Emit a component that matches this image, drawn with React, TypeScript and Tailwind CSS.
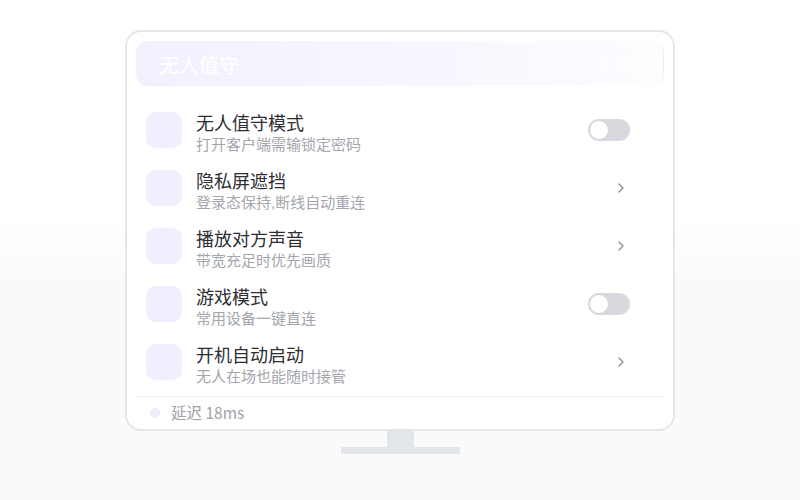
import React from "react";

type Row = { title: string; sub: string; kind: "toggle" | "chevron" };

const rows: Row[] = [
  { title: "无人值守模式", sub: "打开客户端需输锁定密码", kind: "toggle" },
  { title: "隐私屏遮挡", sub: "登录态保持,断线自动重连", kind: "chevron" },
  { title: "播放对方声音", sub: "带宽充足时优先画质", kind: "chevron" },
  { title: "游戏模式", sub: "常用设备一键直连", kind: "toggle" },
  { title: "开机自动启动", sub: "无人在场也能随时接管", kind: "chevron" },
];

function Toggle() {
  return (
    <div className="w-[42px] h-[22px] rounded-full bg-[#d7d9df] p-[1px] flex items-center mr-[33px]">
      <div className="w-[20px] h-[20px] rounded-full bg-white border border-[#d3d6dc]" />
    </div>
  );
}

function Chevron() {
  return (
    <svg width="8" height="12" viewBox="0 0 8 12" className="mr-[38px]">
      <path d="M2 2 L6 6 L2 10" fill="none" stroke="#8d919b" strokeWidth="1.4" strokeLinecap="round" strokeLinejoin="round" />
    </svg>
  );
}

export default function App() {
  return (
    <div
      className="w-[800px] h-[500px] flex flex-col items-center bg-[linear-gradient(to_bottom,#ffffff_0%,#ffffff_44%,#fafafb_56%,#fafafb_100%)]"
      style={{ fontFamily: '"Noto Sans CJK SC", "Noto Sans", sans-serif' }}
    >
      <div className="mt-[30px] w-[550px] h-[401px] rounded-[16px] border-2 border-[#e4e6ea] bg-white pt-[9px] px-[9px] flex flex-col">
        <div className="h-[45px] rounded-[12px] bg-[linear-gradient(to_right,#f3f0fe,#f8f7ff_60%,#fdfdff)] flex items-center pl-[23px] pr-[14px] border-r border-[#eeeef2]">
          <span className="text-[20px] font-medium text-white leading-none mt-[2px]">无人值守</span>
          <div className="ml-auto flex gap-[8px]">
            <div className="w-[12px] h-[12px] rounded-full bg-white/40" />
            <div className="w-[12px] h-[12px] rounded-full bg-white/40" />
            <div className="w-[12px] h-[12px] rounded-full bg-white/40" />
          </div>
        </div>
        <div className="mt-[15px] flex flex-col px-[1px]">
          {rows.map((r) => (
            <div key={r.title} className="h-[58px] flex items-center pl-[9px]">
              <div className="w-[36px] h-[36px] rounded-[9px] bg-[#f1effd]" />
              <div
                className="ml-[14px] flex-1 flex flex-col pt-[8px]"
                style={{ fontFamily: '"Liberation Sans", "Noto Sans CJK SC", sans-serif' }}
              >
                <span className="text-[18px] leading-[21px] text-[#2e2e33]">{r.title}</span>
                <span className="text-[15px] leading-[19px] text-[#a3a6ad]">{r.sub}</span>
              </div>
              {r.kind === "toggle" ? <Toggle /> : <Chevron />}
            </div>
          ))}
        </div>
        <div className="mt-[5px] h-px bg-[#f0f1f3]" />
        <div className="flex-1 flex items-center pl-[14px]">
          <div className="w-[10px] h-[10px] rounded-full bg-[#eeebfc]" />
          <span className="ml-[11px] text-[15.5px] text-[#9ea2a9]">延迟 18ms</span>
        </div>
      </div>
      <div className="w-[27px] h-[16px] bg-[#e2e5ea]" />
      <div className="w-[119px] h-[7px] bg-[#e2e5ea]" />
    </div>
  );
}
